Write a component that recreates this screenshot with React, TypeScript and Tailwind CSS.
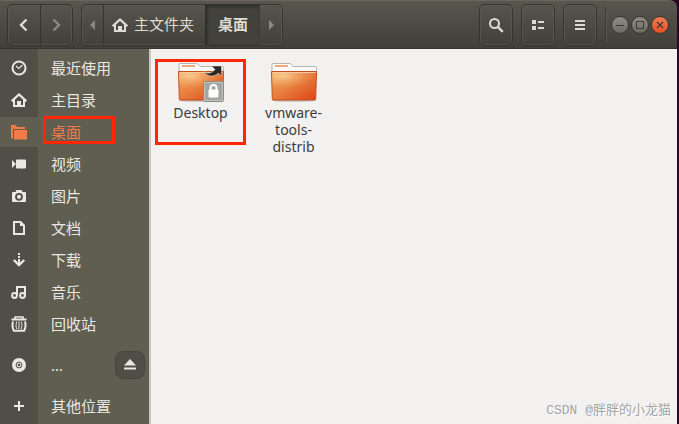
import { ReactNode } from "react";

const Svg = ({ size = 16, children }: { size?: number; children: ReactNode }) => (
  <svg width={size} height={size} viewBox={`0 0 ${size} ${size}`} fill="none" aria-hidden="true">
    {children}
  </svg>
);

const HomeIcon = () => (
  <Svg>
    <path d="M.7 9.2 8 2.400l7.300 6.800" stroke="currentColor" strokeWidth="2.200" />
    <path d="M3 8v6h4v-4h2v4h4V8" stroke="currentColor" strokeWidth="2" />
  </Svg>
);

const ClockIcon = () => (
  <Svg>
    <circle cx="8" cy="8" r="6.5" stroke="currentColor" strokeWidth="2" />
    <path d="m5 6 2.8 2.5L11.5 5" stroke="currentColor" strokeWidth="1.2" />
  </Svg>
);

const FoldersIcon = () => (
  <Svg>
    <path d="M0 1h5l1 2h8v2H2v9.500H0z" fill="currentColor" />
    <path d="M3 6h13v9.5H3z" fill="currentColor" />
  </Svg>
);

const VideoIcon = () => (
  <Svg>
    <path d="m1 4 4 4-4 4z" fill="currentColor" />
    <rect x="5" y="3.5" width="10" height="9" rx="1" fill="currentColor" />
  </Svg>
);

const CameraIcon = () => (
  <Svg>
    <path
      d="M2 4h2.5L5.5 2h5l1 2H14a1 1 0 0 1 1 1v8a1 1 0 0 1-1 1H2a1 1 0 0 1-1-1V5a1 1 0 0 1 1-1z"
      fill="currentColor"
    />
    <circle cx="8" cy="8.8" r="3" stroke="#504f47" strokeWidth="1.8" />
  </Svg>
);

const DocumentIcon = () => (
  <Svg>
    <path d="M3 2h6.5L13 5.5V14H3z" stroke="currentColor" strokeWidth="2" />
    <path d="M9 2v4h4z" fill="currentColor" />
  </Svg>
);

const DownloadIcon = () => (
  <Svg>
    <path d="M8 1v2M8 4v2M8 7v5" stroke="currentColor" strokeWidth="2" />
    <path d="m2.8 8 5.2 5 5.2-5" stroke="currentColor" strokeWidth="2.4" />
  </Svg>
);

const MusicIcon = () => (
  <Svg>
    <circle cx="3.5" cy="11.5" r="2.4" stroke="currentColor" strokeWidth="2" />
    <circle cx="11.5" cy="11.5" r="2.4" stroke="currentColor" strokeWidth="2" />
    <path d="M6 11.500V3h8v8.500" stroke="currentColor" strokeWidth="2" />
  </Svg>
);

const TrashIcon = () => (
  <Svg>
    <path d="M4 3V1h8v2" stroke="currentColor" strokeWidth="1.600" />
    <path d="M.5 3.500h15" stroke="currentColor" strokeWidth="2" />
    <path d="M2 5.500c-.8 3-.6 6.500.8 9.300h10.400c1.400-2.800 1.600-6.300.8-9.300" stroke="currentColor" strokeWidth="2" />
    <path d="M5.800 5.500c-1 3-1 5 0 7.500M8 5.500V13M10.200 5.500c1 3 1 5 0 7.500" stroke="currentColor" strokeWidth="1" />
  </Svg>
);

const DiscIcon = () => (
  <Svg>
    <circle cx="8" cy="8" r="7" fill="currentColor" />
    <circle cx="8" cy="8" r="2.9" stroke="#504f47" strokeWidth="1" />
    <circle cx="8" cy="8" r="1.3" fill="#504f47" />
  </Svg>
);

const PlusIcon = () => (
  <Svg>
    <path d="M8 3v10M3 8h10" stroke="currentColor" strokeWidth="2" />
  </Svg>
);

const FolderIcon = ({ id, locked = false }: { id: string; locked?: boolean }) => (
  <svg width="48" height="40" viewBox="0 0 48 40" fill="none" aria-hidden="true">
    <defs>
      <linearGradient id={`${id}-front`} x1="0" y1="0" x2="1" y2="1">
        <stop offset="0" stopColor="#f0a860" />
        <stop offset="0.5" stopColor="#e77c3d" />
        <stop offset="1" stopColor="#dd4313" />
      </linearGradient>
      <radialGradient id={`${id}-glow`} cx="0.25" cy="0.2" r="0.7">
        <stop offset="0" stopColor="#fbd9a0" stopOpacity="0.8" />
        <stop offset="1" stopColor="#f3a566" stopOpacity="0" />
      </radialGradient>
    </defs>
    <ellipse cx="24" cy="38.5" rx="22" ry="1.3" fill="#00000033" />
    <path d="M2 10V2.5q0-1 1-1h16.500q1 0 1.500.7L23 4.500h22.500q1 0 1 1V10z" fill="#fafafa" stroke="#b5b3b0" />
    <rect x="5" y="3" width="13" height="2" fill="#f2a675" />
    <path d="M1.500 9.500h45l-.8 27.500q-.1 1-1.200 1h-41q-1.100 0-1.200-1z" fill={`url(#${id}-front)`} stroke="#c4501f" />
    <path d="M2 10h44l-.3 9C33 20 18 28 2.500 29z" fill={`url(#${id}-glow)`} />
    <path d="M2.500 10.500h43" stroke="#f7c9a0" />
    {locked && (
      <>
        <path
          d="M27.500 9.500C31 12.500 35 11 38 7.500L34.500 4h10v10l-3-3C37 15.500 30 15 27.500 9.500z"
          fill="#2a2a2a"
          stroke="#ffffffaa"
          strokeWidth="0.6"
        />
        <rect x="26.500" y="19.500" width="20" height="20" rx="1.500" fill="#a5a5a0" stroke="#8b8b87" />
        <rect x="27.500" y="20.500" width="18" height="18" stroke="#c1c1bd" />
        <path d="M33.500 29v-3a3 3 0 0 1 6 0v3" stroke="#fff" strokeWidth="2" />
        <rect x="31.500" y="27.500" width="10" height="8" rx="1" fill="#fff" />
      </>
    )}
  </svg>
);

const places = [
  { label: "最近使用", icon: <ClockIcon /> },
  { label: "主目录", icon: <HomeIcon /> },
  { label: "桌面", icon: <FoldersIcon />, active: true },
  { label: "视频", icon: <VideoIcon /> },
  { label: "图片", icon: <CameraIcon /> },
  { label: "文档", icon: <DocumentIcon /> },
  { label: "下载", icon: <DownloadIcon /> },
  { label: "音乐", icon: <MusicIcon /> },
  { label: "回收站", icon: <TrashIcon /> },
];

type PlaceProps = { label: string; icon: ReactNode; active?: boolean };

function Place({ label, icon, active }: PlaceProps) {
  return (
    <a
      href="#"
      className={`relative flex h-8 min-w-0 flex-1 items-center ${active ? "text-[#f37b49]" : "text-[#e9e8e3]"}`}
    >
      <span
        className={`flex h-[30px] w-[38px] shrink-0 items-center justify-center ${active ? "bg-[#605e51]" : ""}`}
      >
        {icon}
      </span>
      <span className="pl-[13px]">{label}</span>
      {active && <span className="absolute top-0 left-[43px] h-[28px] w-[72px] border-3 border-[#ff2600]" />}
    </a>
  );
}

const headerButton =
  "flex h-[42px] w-[34px] items-center justify-center rounded-[5px] border border-[#35342f] inset-shadow-[0_0_0_1px_#63615780]";

const roundButton =
  "flex size-[18px] items-center justify-center rounded-full border border-[#37362f] text-[#3b3a35]";

export default function App() {
  return (
    <div className="flex min-h-screen flex-col bg-[#2a0a22] pr-[2px] font-['Noto_Sans','Noto_Sans_CJK_SC',sans-serif] text-[15px] leading-[17px]">
      <header className="flex h-[49px] items-center rounded-tr-lg border-t border-b border-t-[#69675d] border-b-[#353430] bg-linear-to-b from-[#59574d] to-[#403f3a] pr-2 pl-[7px] text-[#dfdbd2]">
        <div className="flex h-[42px] w-[66px] rounded-[5px] border border-[#35342f] inset-shadow-[0_0_0_1px_#63615780]">
          <button aria-label="后退" className="flex flex-1 items-center justify-center border-r border-[#35342f]">
            <Svg>
              <path d="M10.500 2.500 5 8l5.500 5.500" stroke="currentColor" strokeWidth="2.400" />
            </Svg>
          </button>
          <button aria-label="前进" className="flex flex-1 items-center justify-center text-[#8b8981]">
            <Svg>
              <path d="M5.500 2.500 11 8l-5.500 5.500" stroke="currentColor" strokeWidth="2.400" />
            </Svg>
          </button>
        </div>

        <nav className="ml-2 flex h-[42px] rounded-[5px] border border-[#35342f] inset-shadow-[0_0_0_1px_#63615780]">
          <button
            aria-label="向左滚动"
            className="flex w-[22px] items-center justify-center border-r border-[#35342f] text-[#8b8981]"
          >
            <Svg>
              <path d="M10 3v10L5 8z" fill="currentColor" />
            </Svg>
          </button>
          <button className="flex w-[101px] items-center gap-[6px] pl-2">
            <HomeIcon />
            主文件夹
          </button>
          <button className="w-[55px] border-l border-[#2f2e2a] bg-[#42413b] font-bold inset-shadow-[1px_1px_3px_#2a2925]">
            桌面
          </button>
          <button aria-label="向右滚动" className="flex w-[22px] items-center justify-center text-[#8b8981]">
            <Svg>
              <path d="M6 3v10l5-5z" fill="currentColor" />
            </Svg>
          </button>
        </nav>

        <div className="ml-auto flex items-center gap-2">
          <button aria-label="搜索" className={headerButton}>
            <Svg>
              <circle cx="6.5" cy="6.5" r="4.5" stroke="currentColor" strokeWidth="2" />
              <path d="m9.800 9.800 5 5" stroke="currentColor" strokeWidth="2.400" />
            </Svg>
          </button>
          <button aria-label="视图" className={headerButton}>
            <Svg>
              <path d="M2 3h4v4H2zM2 9h4v4H2zM8 4h6v2H8zM8 10h6v2H8z" fill="currentColor" />
            </Svg>
          </button>
          <button aria-label="菜单" className={headerButton}>
            <Svg>
              <path d="M3 3h10v2H3zM3 7h10v2H3zM3 11h10v2H3z" fill="currentColor" />
            </Svg>
          </button>
          <span className="h-[36px] w-[2px] border-l border-[#3a3934] bg-[#5b594f]" />
        </div>
        <div className="ml-1 flex gap-[2px]">
          <button aria-label="最小化" className={`${roundButton} bg-linear-to-b from-[#8f8d84] to-[#6c6a62]`}>
            <Svg>
              <path d="M4 8.500h8" stroke="currentColor" />
            </Svg>
          </button>
          <button aria-label="最大化" className={`${roundButton} bg-linear-to-b from-[#8f8d84] to-[#6c6a62]`}>
            <Svg>
              <rect x="4.5" y="4.5" width="7" height="7" stroke="currentColor" />
            </Svg>
          </button>
          <button aria-label="关闭" className={`${roundButton} bg-linear-to-b from-[#f47b55] to-[#e3501f]`}>
            <Svg>
              <path d="m5 5 6 6M11 5l-6 6" stroke="currentColor" strokeWidth="1.3" />
            </Svg>
          </button>
        </div>
      </header>

      <div className="flex flex-1">
        <aside className="w-[151px] shrink-0 border-r-2 border-[#c9c7c3] bg-linear-to-r from-[#504f47] from-[37px] via-[#464540] via-[37px] to-[#605e51] to-[38px] pt-[3px]">
          {places.map((place) => (
            <div key={place.label} className="flex">
              <Place {...place} />
            </div>
          ))}
          <div className="mt-[9px] flex items-center pr-1">
            <Place label="…" icon={<DiscIcon />} />
            <button
              aria-label="弹出"
              className="flex h-7 w-[30px] items-center justify-center rounded-lg border border-[#46453e] bg-[#504f47] text-[#e9e8e3]"
            >
              <Svg>
                <path d="m8 2 6 6.500H2zM2 10.500h12v2H2z" fill="currentColor" />
              </Svg>
            </button>
          </div>
          <div className="mt-[9px] flex">
            <Place label="其他位置" icon={<PlusIcon />} />
          </div>
        </aside>

        <main className="flex flex-1 flex-col justify-between bg-[#f2f1f0]">
          <div className="flex items-start gap-[2px] pt-[10px] pl-1 text-center text-[14px] leading-[17px] text-[#3c3c3c]">
            <div className="relative flex h-[86px] w-[91px] flex-col items-center px-3 pt-[3px]">
              <FolderIcon id="desktop" locked />
              <span className="pt-[2px]">Desktop</span>
              <span className="absolute inset-0 border-3 border-[#ff2600]" />
            </div>
            <div className="flex w-[91px] flex-col items-center px-3 pt-[3px]">
              <FolderIcon id="vmware" />
              <span className="pt-[2px]">vmware-tools-distrib</span>
            </div>
          </div>
          <p className="pr-[6px] pb-[5px] text-right font-['Liberation_Mono','Noto_Sans_CJK_SC',monospace] text-[13px] text-[#a3a3a3] text-shadow-[1px_1px_0_#ffffff]">
            CSDN @胖胖的小龙猫
          </p>
        </main>
      </div>
    </div>
  );
}
